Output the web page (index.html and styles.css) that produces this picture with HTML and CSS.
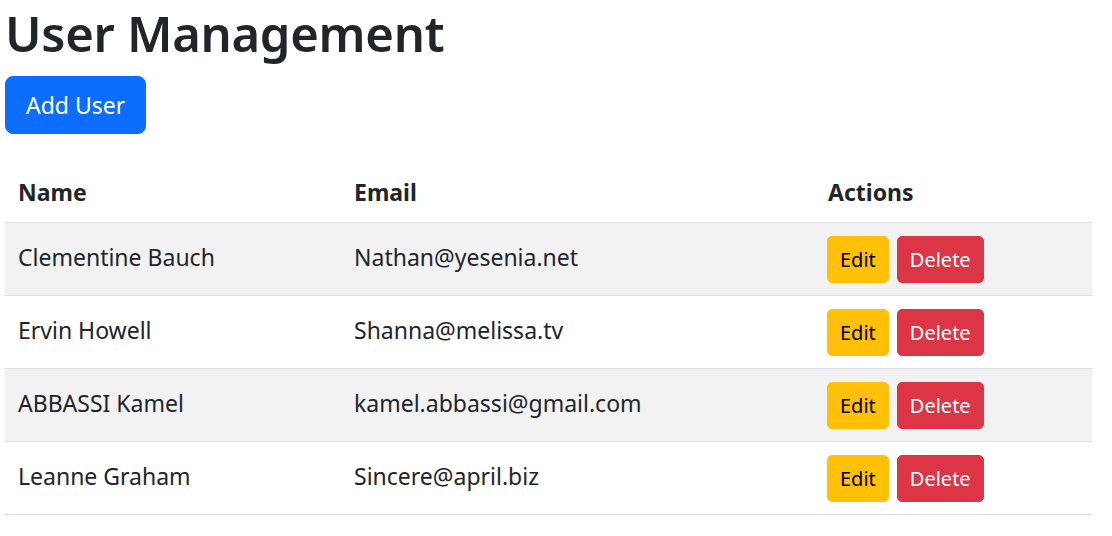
FILE: index.html
```html
<!DOCTYPE html>
<html lang="en">
<head>
<meta charset="utf-8">
<title>User Management</title>
<link rel="stylesheet" href="styles.css">
</head>
<body>
<div class="container">
  <h1 class="title">User Management</h1>
  <button class="btn btn-primary">Add User</button>
  <table class="table">
    <thead>
      <tr><th class="col-name">Name</th><th class="col-email">Email</th><th class="col-actions">Actions</th></tr>
    </thead>
    <tbody>
      <tr class="striped"><td>Clementine Bauch</td><td>Nathan@yesenia.net</td><td><div class="actions"><button class="btn-sm btn-warning">Edit</button><button class="btn-sm btn-danger">Delete</button></div></td></tr>
      <tr><td>Ervin Howell</td><td>Shanna@melissa.tv</td><td><div class="actions"><button class="btn-sm btn-warning">Edit</button><button class="btn-sm btn-danger">Delete</button></div></td></tr>
      <tr class="striped"><td>ABBASSI Kamel</td><td>kamel.abbassi@gmail.com</td><td><div class="actions"><button class="btn-sm btn-warning">Edit</button><button class="btn-sm btn-danger">Delete</button></div></td></tr>
      <tr><td>Leanne Graham</td><td>Sincere@april.biz</td><td><div class="actions"><button class="btn-sm btn-warning">Edit</button><button class="btn-sm btn-danger">Delete</button></div></td></tr>
    </tbody>
  </table>
</div>
</body>
</html>
```
FILE: styles.css
```css
html, body {
  margin: 0;
  padding: 0;
  background: #fff;
}
body {
  font-family: "Noto Sans", "Open Sans", sans-serif;
  font-size: 23px;
  line-height: 1.5;
  color: #212529;
}
.container {
  padding: 0 20px 0 5px;
}
.title {
  margin: 0 0 10px 0;
  font-size: 49px;
  font-weight: 600;
  line-height: 66px;
  letter-spacing: -0.3px;
}
.btn {
  display: block;
  font-family: inherit;
  font-size: 23px;
  line-height: 34px;
  padding: 11px 20px;
  border: 1px solid transparent;
  border-radius: 8px;
  cursor: pointer;
}
.btn-primary {
  background: #0d6efd;
  color: #fff;
  border-color: #0d6efd;
}
.table {
  width: 100%;
  margin-top: 28px;
  border-collapse: collapse;
}
.table th, .table td {
  text-align: left;
  vertical-align: top;
  padding: 13px 13px 12px;
  border-bottom: 1px solid #dee2e6;
  line-height: 36px;
}
.table th {
  padding-top: 12px;
}
.table td {
  line-height: 42px;
}
.table th {
  font-weight: 700;
}
.col-name { width: 310px; }
.col-email { width: 448px; }
.striped td {
  background: #f2f2f2;
}
.actions {
  display: flex;
  gap: 8px;
  margin-left: -1px;
}
.btn-sm {
  font-family: inherit;
  font-size: 20px;
  line-height: 29px;
  height: 47px;
  padding: 8px 12px;
  border: 1px solid transparent;
  border-radius: 5px;
  cursor: pointer;
}
.btn-warning {
  background: #ffc107;
  border-color: #ffc107;
  color: #000;
}
.btn-danger {
  background: #dc3545;
  border-color: #dc3545;
  color: #fff;
}
```
